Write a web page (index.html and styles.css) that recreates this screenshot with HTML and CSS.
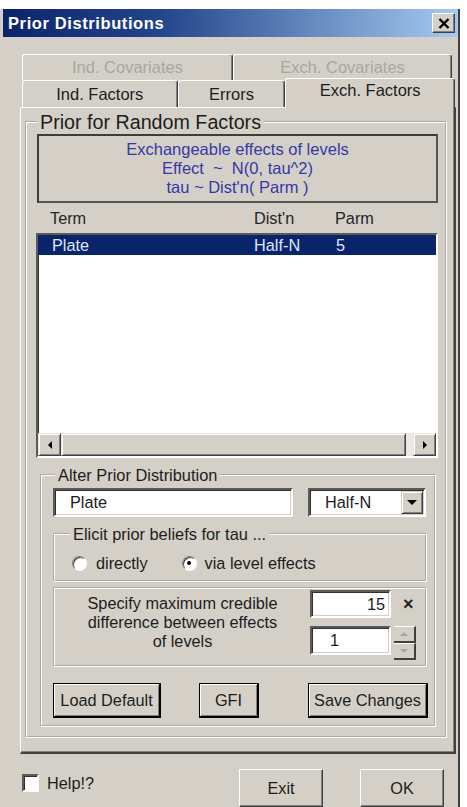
FILE: index.html
```html
<!DOCTYPE html>
<html lang="en">

<head>
    <meta charset="UTF-8">
    <meta name="viewport" content="width=device-width, initial-scale=1.0">
    <title>Prior Distributions</title>
    <link rel="stylesheet" href="styles.css">
</head>

<body>
    <div class="window">
        <div class="titlebar">
            <span class="title">Prior Distributions</span>
            <button class="close-btn" type="button">
                <svg width="12" height="11" viewBox="0 0 12 11">
                    <path d="M1.5 1 L10.5 10 M10.5 1 L1.5 10" stroke="#000" stroke-width="2.4" fill="none" />
                </svg>
            </button>
        </div>

        <div class="tabs">
            <div class="tab-row back">
                <div class="tab disabled tab-ind-cov">Ind. Covariates</div>
                <div class="tab disabled tab-exch-cov">Exch. Covariates</div>
            </div>
            <div class="tab-row front">
                <div class="tab tab-ind">Ind. Factors</div>
                <div class="tab tab-err">Errors</div>
                <div class="tab active tab-exch">Exch. Factors</div>
            </div>
        </div>

        <div class="panel">
            <fieldset class="group main-group">
                <legend class="big-legend">Prior for Random Factors</legend>

                <div class="info">
                    <div>Exchangeable effects of levels</div>
                    <div>Effect &nbsp;~&nbsp; N(0, tau^2)</div>
                    <div>tau ~ Dist'n( Parm )</div>
                </div>

                <div class="list-head">
                    <span>Term</span>
                    <span>Dist'n</span>
                    <span>Parm</span>
                </div>

                <div class="listbox">
                    <div class="list-rows">
                        <div class="list-row selected">
                            <span>Plate</span>
                            <span>Half-N</span>
                            <span>5</span>
                        </div>
                    </div>
                    <div class="hscroll">
                        <div class="sb-btn"><span class="arrow-left"></span></div>
                        <div class="sb-thumb"></div>
                        <div class="sb-track"></div>
                        <div class="sb-btn"><span class="arrow-right"></span></div>
                    </div>
                </div>

                <fieldset class="group alter-group">
                    <legend>Alter Prior Distribution</legend>

                    <div class="field-row">
                        <div class="textbox term-box">Plate</div>
                        <div class="textbox combo">
                            <span>Half-N</span>
                            <div class="combo-btn"><span class="arrow-down"></span></div>
                        </div>
                    </div>

                    <fieldset class="group elicit-group">
                        <legend>Elicit prior beliefs for tau ...</legend>
                        <div class="radio-row">
                            <label class="radio-item"><span class="radio"></span>directly</label>
                            <label class="radio-item second"><span class="radio checked"></span>via level effects</label>
                        </div>
                    </fieldset>

                    <div class="specify">
                        <div class="spec-text">
                            Specify maximum credible<br>
                            difference between effects<br>
                            of levels
                        </div>
                        <div class="spec-inputs">
                            <div class="spec-line">
                                <div class="textbox num-box right">15</div>
                                <span class="times">&times;</span>
                            </div>
                            <div class="spec-line second-line">
                                <div class="textbox num-box left">1</div>
                                <div class="spinner">
                                    <div class="spin-btn"><span class="arrow-up"></span></div>
                                    <div class="spin-btn"><span class="arrow-dn"></span></div>
                                </div>
                            </div>
                        </div>
                    </div>

                    <div class="button-row">
                        <button class="btn default-btn btn-load" type="button">Load Default</button>
                        <button class="btn default-btn btn-gfi" type="button">GFI</button>
                        <button class="btn default-btn btn-save" type="button">Save Changes</button>
                    </div>
                </fieldset>
            </fieldset>
        </div>

        <div class="footer">
            <label class="help">
                <span class="checkbox"></span>
                Help!?
            </label>
            <div class="footer-buttons">
                <button class="btn plain-btn" type="button">Exit</button>
                <button class="btn plain-btn" type="button">OK</button>
            </div>
        </div>
    </div>
</body>

</html>
```

FILE: styles.css
```css
body {
    margin: 0;
    background: #fff;
    font-family: "Liberation Sans", Arial, sans-serif;
    font-size: 16.3px;
    color: #1c1c1c;
}

.window {
    width: 455px;
    height: 798px;
    margin-top: 9px;
    padding-left: 3px;
    background: #d4d0c8;
    border-right: 2px solid #3f3f3f;
    overflow: hidden;
}

/* title bar */

.titlebar {
    height: 28px;
    display: flex;
    align-items: center;
    justify-content: space-between;
    background: linear-gradient(90deg, #0a246a 0%, #24468c 35%, #a6caf0 100%);
}

.title {
    padding-left: 5px;
    color: #fff;
    font-weight: bold;
    font-size: 16.5px;
    letter-spacing: 0.6px;
}

.close-btn {
    width: 23px;
    height: 20px;
    margin-right: 3px;
    padding: 0;
    display: flex;
    align-items: center;
    justify-content: center;
    background: #d4d0c8;
    border: 1px solid;
    border-color: #fff #404040 #404040 #fff;
    box-shadow: inset -1px -1px 0 #808080;
}

/* tabs */

.tabs {
    margin: 17px 0 0 19px;
    width: 433px;
}

.tab-row {
    display: flex;
}

.tab-row.back {
    height: 26px;
}

.tab-row.front {
    height: 27px;
    align-items: flex-end;
}

.tab {
    box-sizing: border-box;
    height: 100%;
    display: flex;
    align-items: center;
    justify-content: center;
    background: #d4d0c8;
    border: 1px solid;
    border-color: #fff #404040 transparent #fff;
    border-bottom: none;
    border-radius: 3px 3px 0 0;
    box-shadow: inset -1px 0 0 #808080;
    font-size: 16.5px;
}

.tab.disabled {
    color: #a9a69f;
}

.tab-ind-cov {
    width: 211px;
}

.tab-exch-cov {
    width: 219px;
}

.tab-ind {
    width: 156px;
}

.tab-err {
    width: 108px;
}

.tab.active {
    position: relative;
    z-index: 1;
    width: 170px;
    height: 30px;
    margin-bottom: -1px;
    padding-bottom: 6px;
}

/* panel and groups */

.panel {
    box-sizing: border-box;
    width: 436px;
    margin-left: 17px;
    padding: 3px 0 14px 4px;
    border-top: 1px solid #fff;
    border-left: 1px solid #fff;
    border-right: 2px solid #404040;
    border-bottom: 2px solid #404040;
    box-shadow: inset -1px -1px 0 #808080;
}

.group {
    margin: 0;
    padding: 0;
    min-inline-size: 0;
    box-sizing: border-box;
    border: 2px groove #fff;
}

.group legend {
    padding: 0 3px;
    line-height: 20px;
    font-size: 16.4px;
}

.main-group {
    width: 422px;
    padding-bottom: 9px;
}

.main-group .big-legend {
    margin-left: 10px;
    font-size: 19.7px;
    line-height: 22px;
}

.info {
    box-sizing: border-box;
    width: 401px;
    margin: 1px 0 0 10px;
    padding: 4px 0;
    border: 2px solid #3c3c3c;
    border-right-color: #555;
    border-bottom-color: #555;
    text-align: center;
    line-height: 19px;
    font-size: 16.5px;
    color: #3737a6;
}

.list-head {
    display: grid;
    grid-template-columns: 204px 81px 1fr;
    height: 30px;
    align-items: center;
    padding-left: 23px;
    color: #262626;
}

.listbox {
    box-sizing: border-box;
    width: 402px;
    height: 225px;
    margin-left: 9px;
    display: flex;
    flex-direction: column;
    background: #fff;
    border: 2px solid;
    border-color: #5a5a5a #fff #fff #5a5a5a;
    box-shadow: inset 1px 1px 0 #303030;
}

.list-rows {
    flex: 1;
}

.list-row {
    display: grid;
    grid-template-columns: 202px 82px 1fr;
    height: 20px;
    align-items: center;
    padding-left: 14px;
}

.list-row.selected {
    background: #0a246a;
    color: #dfe6ff;
}

.hscroll {
    height: 23px;
    display: flex;
    background: #ebe9e5;
}

.sb-btn,
.sb-thumb {
    box-sizing: border-box;
    background: #d4d0c8;
    border: 1px solid;
    border-color: #e8e6e2 #404040 #404040 #e8e6e2;
    box-shadow: inset 1px 1px 0 #fff, inset -1px -1px 0 #808080;
}

.sb-btn {
    width: 23px;
    display: flex;
    align-items: center;
    justify-content: center;
}

.sb-thumb {
    width: 345px;
}

.sb-track {
    flex: 1;
}

.arrow-left {
    border-top: 4px solid transparent;
    border-bottom: 4px solid transparent;
    border-right: 4px solid #000;
}

.arrow-right {
    border-top: 4px solid transparent;
    border-bottom: 4px solid transparent;
    border-left: 4px solid #000;
}

.alter-group {
    width: 396px;
    margin: 7px 0 0 13px;
    padding: 3px 0 7px;
}

.alter-group legend {
    margin-left: 13px;
}

.field-row {
    display: flex;
    gap: 15px;
    margin-left: 11px;
}

.textbox {
    box-sizing: border-box;
    height: 29px;
    display: flex;
    align-items: center;
    background: #fff;
    border: 2px solid;
    border-color: #5a5a5a #fff #fff #5a5a5a;
    box-shadow: inset 1px 1px 0 #303030, inset -1px -1px 0 #d4d0c8;
}

.term-box {
    width: 240px;
    padding-left: 15px;
}

.combo {
    width: 118px;
    padding-left: 15px;
    justify-content: space-between;
}

.combo-btn {
    box-sizing: border-box;
    width: 22px;
    height: 23px;
    margin-right: 1px;
    display: flex;
    align-items: center;
    justify-content: center;
    background: #d4d0c8;
    border: 1px solid;
    border-color: #d4d0c8 #404040 #404040 #d4d0c8;
    box-shadow: inset 1px 1px 0 #fff, inset -1px -1px 0 #808080;
}

.arrow-down {
    border-left: 5px solid transparent;
    border-right: 5px solid transparent;
    border-top: 5px solid #000;
}

.elicit-group {
    width: 374px;
    margin: 7px 0 0 11px;
    padding: 8px 0 6px;
}

.elicit-group legend {
    margin-left: 15px;
}

.radio-row {
    height: 22px;
    display: flex;
    align-items: center;
    padding-left: 17px;
}

.radio-item {
    display: flex;
    align-items: center;
    gap: 9px;
}

.radio-item.second {
    margin-left: 34px;
    gap: 8px;
}

.radio {
    box-sizing: border-box;
    width: 15px;
    height: 15px;
    border-radius: 50%;
    background: #fff;
    border: 1px solid;
    border-color: #808080 #fff #fff #808080;
    box-shadow: inset 1px 1px 0 #404040;
    display: flex;
    align-items: center;
    justify-content: center;
}

.radio.checked::after {
    content: "";
    width: 4px;
    height: 4px;
    border-radius: 50%;
    background: #000;
}

.specify {
    box-sizing: border-box;
    width: 374px;
    height: 80px;
    margin: 5px 0 0 11px;
    display: flex;
    border: 2px groove #fff;
}

.spec-text {
    width: 255px;
    padding-top: 5px;
    text-align: center;
    line-height: 19px;
}

.spec-inputs {
    padding-top: 1px;
}

.spec-line {
    display: flex;
    align-items: center;
}

.second-line {
    margin-top: 8px;
    align-items: flex-start;
}

.num-box {
    width: 81px;
}

.spec-line:first-child .num-box {
    height: 28px;
}

.num-box.right {
    justify-content: flex-end;
    padding-right: 4px;
}

.num-box.left {
    padding-left: 18px;
}

.times {
    margin-left: 12px;
    font-weight: bold;
    font-size: 18px;
    color: #222;
}

.spinner {
    width: 22px;
    margin-left: 3px;
    display: flex;
    flex-direction: column;
}

.spin-btn {
    box-sizing: border-box;
    height: 17px;
    display: flex;
    align-items: center;
    justify-content: center;
    border-right: 2px solid #404040;
    border-bottom: 2px solid #404040;
    border-top: 1px solid #fff;
}

.arrow-up {
    border-left: 4px solid transparent;
    border-right: 4px solid transparent;
    border-bottom: 4px solid #a8a59e;
}

.arrow-dn {
    border-left: 4px solid transparent;
    border-right: 4px solid transparent;
    border-top: 4px solid #a8a59e;
}

.button-row {
    display: flex;
    margin: 16px 0 0 11px;
}

.btn {
    box-sizing: border-box;
    padding: 0;
    font-family: inherit;
    font-size: 16.3px;
    color: #1c1c1c;
    background: #d4d0c8;
}

.default-btn {
    height: 35px;
    border: 1px solid #000;
    border-right-width: 2px;
    border-bottom-width: 2px;
    box-shadow: inset 1px 1px 0 #fff, inset -1px -1px 0 #808080;
}

.btn-load {
    width: 108px;
}

.btn-gfi {
    width: 60px;
    margin-left: 38px;
}

.btn-save {
    width: 120px;
    margin-left: 49px;
}

/* footer */

.footer {
    height: 38px;
    margin-top: 15px;
    display: flex;
}

.help {
    display: flex;
    align-items: center;
    gap: 8px;
    height: 18px;
    margin: 5px 0 0 19px;
}

.checkbox {
    box-sizing: border-box;
    width: 17px;
    height: 18px;
    background: #fff;
    border: 2px solid;
    border-color: #5a5a5a #fff #fff #5a5a5a;
    box-shadow: inset 1px 1px 0 #303030;
}

.footer-buttons {
    display: flex;
    gap: 37px;
    margin: 0 14px 0 auto;
}

.plain-btn {
    width: 84px;
    height: 38px;
    border: 1px solid;
    border-color: #fff #404040 #404040 #fff;
    box-shadow: inset -1px -1px 0 #808080;
}
```
